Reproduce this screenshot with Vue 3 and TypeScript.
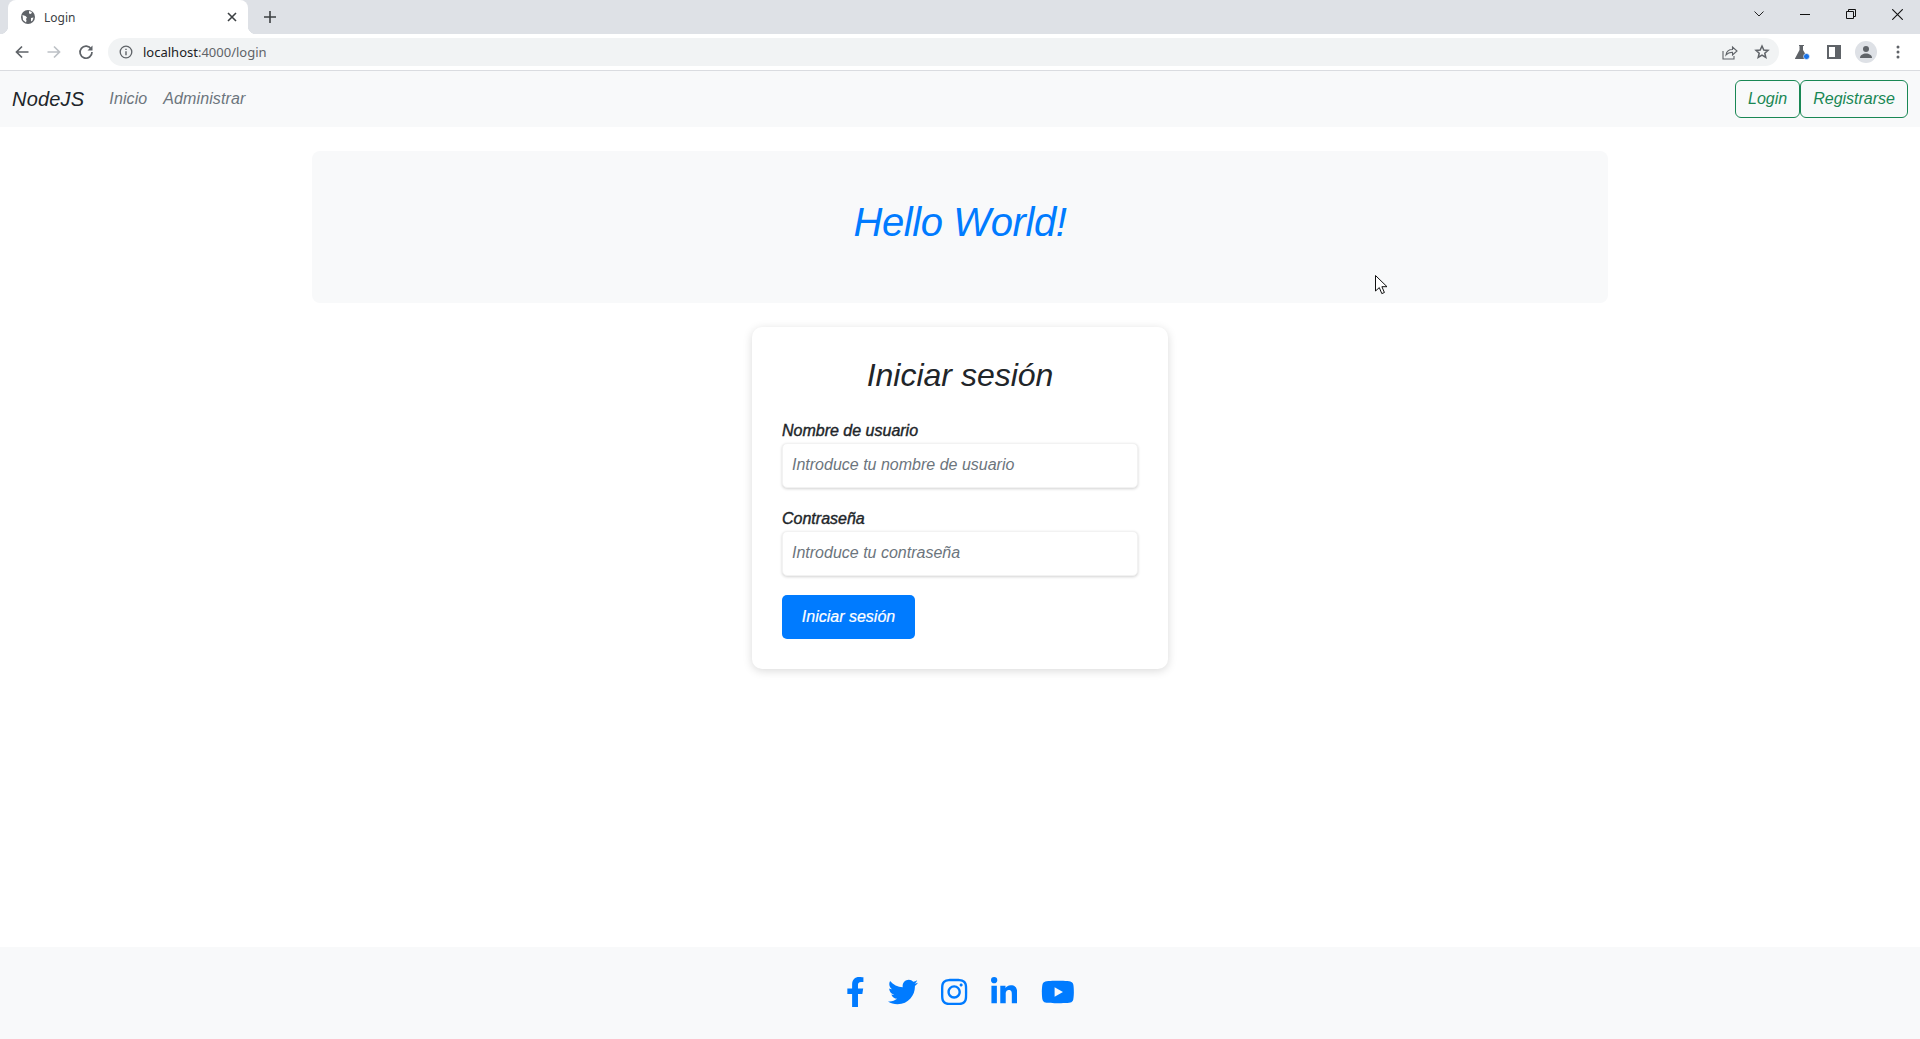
<script setup lang="ts">
const navLinks = ["Inicio", "Administrar"]

const socials = [
  { name: "facebook", w: 320, box: "0 0 320 512", d: "M279.14 288l14.22-92.66h-88.91v-60.13c0-25.35 12.42-50.06 52.24-50.06h40.42V6.26S260.43 0 225.36 0c-73.22 0-121.08 44.38-121.08 124.72v70.62H22.89V288h81.39v224h100.17V288z" },
  { name: "twitter", w: 512, box: "0 0 512 512", d: "M459.37 151.716c.325 4.548.325 9.097.325 13.645 0 138.72-105.583 298.558-298.558 298.558-59.452 0-114.68-17.219-161.137-47.106 8.447.974 16.568 1.299 25.34 1.299 49.055 0 94.213-16.568 130.274-44.832-46.132-.975-84.792-31.188-98.112-72.772 6.498.974 12.995 1.624 19.818 1.624 9.421 0 18.843-1.3 27.614-3.573-48.081-9.747-84.143-51.98-84.143-102.985v-1.299c13.969 7.797 30.214 12.67 47.431 13.319-28.264-18.843-46.781-51.005-46.781-87.391 0-19.492 5.197-37.36 14.294-52.954 51.655 63.675 129.3 105.258 216.365 109.807-1.624-7.797-2.599-15.918-2.599-24.04 0-57.828 46.782-104.934 104.934-104.934 30.213 0 57.502 12.67 76.67 33.137 23.715-4.548 46.456-13.32 66.599-25.34-7.798 24.366-24.366 44.833-46.132 57.827 21.117-2.273 41.584-8.122 60.426-16.243-14.292 20.791-32.161 39.308-52.628 54.253z" },
  { name: "instagram", w: 448, box: "0 0 448 512", d: "M224.1 141c-63.6 0-114.9 51.3-114.9 114.9s51.3 114.9 114.9 114.9S339 319.5 339 255.9 287.7 141 224.1 141zm0 189.6c-41.1 0-74.7-33.5-74.7-74.7s33.5-74.7 74.7-74.7 74.7 33.5 74.7 74.7-33.6 74.7-74.7 74.7zm146.4-194.3c0 14.9-12 26.8-26.8 26.8-14.9 0-26.8-12-26.8-26.8s12-26.8 26.8-26.8 26.8 12 26.8 26.8zm76.1 27.2c-1.7-35.9-9.9-67.7-36.2-93.9-26.2-26.2-58-34.4-93.9-36.2-37-2.1-147.9-2.1-184.9 0-35.8 1.7-67.6 9.9-93.9 36.1s-34.4 58-36.2 93.9c-2.1 37-2.1 147.9 0 184.9 1.7 35.9 9.9 67.7 36.2 93.9s58 34.4 93.9 36.2c37 2.1 147.9 2.1 184.9 0 35.9-1.7 67.7-9.9 93.9-36.2 26.2-26.2 34.4-58 36.2-93.9 2.1-37 2.1-147.8 0-184.8zM398.8 388c-7.8 19.6-22.9 34.7-42.6 42.6-29.5 11.7-99.5 9-132.1 9s-102.7 2.6-132.1-9c-19.6-7.8-34.7-22.9-42.6-42.6-11.7-29.5-9-99.5-9-132.1s-2.6-102.7 9-132.1c7.8-19.6 22.9-34.7 42.6-42.6 29.5-11.7 99.5-9 132.1-9s102.7-2.6 132.1 9c19.6 7.8 34.7 22.9 42.6 42.6 11.7 29.5 9 99.5 9 132.1s2.7 102.7-9 132.1z" },
  { name: "linkedin", w: 448, box: "0 0 448 512", d: "M100.28 448H7.4V148.9h92.88zM53.79 108.1C24.09 108.1 0 83.5 0 53.8a53.79 53.79 0 0 1 107.58 0c0 29.7-24.1 54.3-53.79 54.3zM447.9 448h-92.68V302.4c0-34.7-.7-79.2-48.29-79.2-48.29 0-55.69 37.7-55.69 76.7V448h-92.78V148.9h89.08v40.8h1.3c12.4-23.5 42.69-48.3 87.88-48.3 94 0 111.28 61.9 111.28 142.3V448z" },
  { name: "youtube", w: 576, box: "0 0 576 512", d: "M549.655 124.083c-6.281-23.65-24.787-42.276-48.284-48.597C458.781 64 288 64 288 64S117.22 64 74.629 75.486c-23.497 6.322-42.003 24.947-48.284 48.597-11.412 42.867-11.412 132.305-11.412 132.305s0 89.438 11.412 132.305c6.281 23.65 24.787 41.5 48.284 47.821C117.22 448 288 448 288 448s170.78 0 213.371-11.486c23.497-6.321 42.003-24.171 48.284-47.821 11.412-42.867 11.412-132.305 11.412-132.305s0-89.438-11.412-132.305zm-317.51 213.508V175.185l142.739 81.205-142.739 81.201z" },
]
</script>

<template>
  <div class="page">
    <div class="tabstrip">
      <div class="tab">
        <svg class="favicon" viewBox="0 0 16 16" width="16" height="16">
          <circle cx="8" cy="8" r="7" fill="#5f6368" />
          <path d="M2.5 6l3 1 1.5 1.5-1 1.5.5 1.5-.5 2L3 11zM9 2l3 1-1 2-2-.5zM11 9l2.5-.5-1 3-1.500 1z" fill="#fff" />
        </svg>
        <span class="tab-title">Login</span>
        <svg class="tab-close" viewBox="0 0 10 10" width="10" height="10">
          <path d="M1 1l8 8M9 1l-8 8" stroke="#3c4043" stroke-width="1.6" fill="none" />
        </svg>
      </div>
      <svg class="new-tab" viewBox="0 0 12 12" width="12" height="12">
        <path d="M6 0v12M0 6h12" stroke="#3c4043" stroke-width="1.6" fill="none" />
      </svg>
      <div class="win-controls">
        <svg class="win-chevron" viewBox="0 0 10 6" width="10" height="6">
          <path d="M.5.5L5 5 9.5.5" stroke="#222" fill="none" />
        </svg>
        <svg class="win-min" viewBox="0 0 10 1" width="10" height="1">
          <path d="M0 .5h10" stroke="#111" fill="none" />
        </svg>
        <svg class="win-restore" viewBox="0 0 10 10" width="10" height="10">
          <path d="M.5 2.5h7v7h-7zM2.5 2.5v-2h7v7h-2" stroke="#111" fill="none" />
        </svg>
        <svg class="win-close" viewBox="0 0 10 10" width="10" height="10">
          <path d="M.2.2l9.6 9.6M9.8.2L.2 9.8" stroke="#111" fill="none" />
        </svg>
      </div>
    </div>

    <div class="toolbar">
      <svg class="tool-icon first" viewBox="0 0 16 16" width="16" height="16">
        <path d="M14.5 8H2.5M8 2.5L2.5 8 8 13.5" stroke="#5f6368" stroke-width="1.7" fill="none" />
      </svg>
      <svg class="tool-icon" viewBox="0 0 16 16" width="16" height="16">
        <path d="M1.5 8h12M8 2.5L13.5 8 8 13.5" stroke="#bdc1c6" stroke-width="1.7" fill="none" />
      </svg>
      <svg class="tool-icon" viewBox="0 0 16 16" width="16" height="16">
        <path d="M13.2 5.2A6 6 0 1 0 14 8" stroke="#5f6368" stroke-width="1.7" fill="none" />
        <path d="M14.5 1.5v5h-5z" fill="#5f6368" />
      </svg>
      <div class="omnibox">
        <svg class="info" viewBox="0 0 14 14" width="14" height="14">
          <circle cx="7" cy="7" r="5.8" stroke="#5f6368" stroke-width="1.3" fill="none" />
          <path d="M7 6.2v4M7 3.8v1.3" stroke="#5f6368" stroke-width="1.4" fill="none" />
        </svg>
        <span class="url"><span class="url-host">localhost</span>:4000/login</span>
        <svg class="omni-share" viewBox="0 0 16 16" width="16" height="16">
          <path d="M1 7v8h11v-3" stroke="#5f6368" stroke-width="1.1" fill="none" />
          <path d="M4 11c.5-3.5 3-5.5 6.5-5.5V3L15 7l-4.5 4V8.3C8 8.3 5.5 9.2 4 11z" stroke="#5f6368" stroke-width="1.1" fill="none" />
        </svg>
        <svg class="omni-star" viewBox="0 0 16 16" width="16" height="16">
          <path d="M8 2l1.8 4 4.2.4-3.2 2.8 1 4.3L8 11.200 4.200 13.500l1-4.300L2 6.400 6.200 6z" stroke="#5f6368" stroke-width="1.5" fill="none" />
        </svg>
      </div>
      <svg class="ext-flask" viewBox="0 0 16 16" width="16" height="16">
        <path d="M5 1h5v1H9v4l5 8.5V15H1v-.5L5.500 6V2H5z" fill="#5f6368" />
        <circle cx="12.5" cy="12.5" r="3" fill="#1a73e8" stroke="#fff" stroke-width=".6" />
      </svg>
      <svg class="ext-panel" viewBox="0 0 14 14" width="14" height="14">
        <path d="M0 0h14v14H0z" fill="#5f6368" />
        <path d="M2 2h6v10H2z" fill="#fff" />
      </svg>
      <div class="avatar">
        <svg viewBox="0 0 14 14" width="14" height="14">
          <circle cx="7" cy="4" r="3" fill="#5f6368" />
          <path d="M1 13c0-3 3-4.5 6-4.5s6 1.5 6 4.5z" fill="#5f6368" />
        </svg>
      </div>
      <svg class="kebab" viewBox="0 0 4 14" width="4" height="14">
        <circle cx="2" cy="2" r="1.5" fill="#5f6368" />
        <circle cx="2" cy="7" r="1.5" fill="#5f6368" />
        <circle cx="2" cy="12" r="1.5" fill="#5f6368" />
      </svg>
    </div>

    <nav class="navbar">
      <a class="brand">NodeJS</a>
      <a v-for="link in navLinks" :key="link" class="nav-link">{{ link }}</a>
      <div class="nav-actions">
        <button class="btn-outline">Login</button>
        <button class="btn-outline">Registrarse</button>
      </div>
    </nav>

    <main class="content">
      <div class="jumbotron">
        <h1 class="hello">Hello World!</h1>
      </div>

      <form class="login-card" @submit.prevent>
        <h2 class="card-title">Iniciar sesión</h2>
        <div class="field">
          <label for="username">Nombre de usuario</label>
          <input id="username" type="text" placeholder="Introduce tu nombre de usuario" />
        </div>
        <div class="field">
          <label for="password">Contraseña</label>
          <input id="password" type="password" placeholder="Introduce tu contraseña" />
        </div>
        <button class="btn-primary" type="submit">Iniciar sesión</button>
      </form>
    </main>

    <footer class="footer">
      <svg
        v-for="s in socials"
        :key="s.name"
        :viewBox="s.box"
        :width="(s.w / 512) * 30"
        height="30"
      >
        <path :d="s.d" fill="#007bff" />
      </svg>
    </footer>

    <svg class="cursor" viewBox="0 0 13 20" width="13" height="20">
      <path d="M.5.5v15.5l3.8-3.4 2.5 6 2.6-1.100-2.5-5.800h5.100z" fill="#fff" stroke="#111" stroke-width="1" />
    </svg>
  </div>
</template>

<style scoped>
.page {
  position: relative;
  display: flex;
  flex-direction: column;
  height: 1039px;
  overflow: hidden;
  background: #fff;
  font-family: "Liberation Sans", Arial, sans-serif;
  font-style: italic;
  color: #212529;
}

.tabstrip {
  display: flex;
  align-items: center;
  height: 34px;
  background: #dee1e6;
  flex-shrink: 0;
}

.tab {
  position: relative;
  display: flex;
  align-items: center;
  align-self: stretch;
  width: 240px;
  margin-left: 8px;
  padding: 0 11px 0 12px;
  box-sizing: border-box;
  background: #fff;
  border-radius: 8px 8px 0 0;
}

.tab::before,
.tab::after {
  content: "";
  position: absolute;
  bottom: 0;
  width: 8px;
  height: 8px;
}

.tab::before {
  left: -8px;
  background: radial-gradient(circle at 0 0, transparent 8px, #fff 8.5px);
}

.tab::after {
  right: -8px;
  background: radial-gradient(circle at 100% 0, transparent 8px, #fff 8.5px);
}

.tab-title {
  margin-left: 8px;
  font-family: "Noto Sans", "Open Sans", sans-serif;
  font-style: normal;
  font-size: 12px;
  color: #3c4043;
  flex: 1;
}

.new-tab {
  margin-left: 16px;
}

.win-controls {
  display: flex;
  align-items: center;
  margin-left: auto;
  padding-bottom: 6px;
  padding-right: 17px;
}

.win-min {
  margin-left: 36px;
}

.win-restore {
  margin-left: 36px;
}

.win-close {
  margin-left: 36px;
  width: 11px;
  height: 11px;
}

.toolbar {
  display: flex;
  align-items: center;
  height: 37px;
  box-sizing: border-box;
  background: #fff;
  border-bottom: 1px solid #dadce0;
  flex-shrink: 0;
  padding-bottom: 1px;
}

.tool-icon {
  margin-left: 16px;
}

.tool-icon.first {
  margin-left: 14px;
}

.omnibox {
  display: flex;
  align-items: center;
  flex: 1;
  height: 28px;
  margin-left: 14px;
  padding: 0 9px 0 11px;
  background: #f1f3f4;
  border-radius: 14px;
}

.url {
  margin-left: 10px;
  flex: 1;
  font-family: "Noto Sans", "Open Sans", sans-serif;
  font-style: normal;
  font-size: 13px;
  color: #5f6368;
}

.url-host {
  color: #202124;
}

.omni-star {
  margin-left: 16px;
}

.ext-flask {
  margin-left: 15px;
}

.ext-panel {
  margin-left: 17px;
}

.avatar {
  display: flex;
  align-items: center;
  justify-content: center;
  width: 22px;
  height: 22px;
  margin-left: 14px;
  border-radius: 50%;
  background: #dee1e6;
}

.kebab {
  margin-left: 19px;
  margin-right: 20px;
}

.navbar {
  display: flex;
  align-items: center;
  height: 56px;
  padding: 0 12px;
  box-sizing: border-box;
  background: #f8f9fa;
  flex-shrink: 0;
}

.brand {
  font-size: 20px;
  letter-spacing: 0.2px;
  color: #212529;
  margin-right: 17px;
}

.nav-link {
  padding: 0 8px;
  font-size: 16px;
  letter-spacing: 0.1px;
  color: #6c757d;
}

.nav-actions {
  display: flex;
  margin-left: auto;
}

.btn-outline {
  height: 38px;
  padding: 0 12px;
  font: italic 16px "Liberation Sans", Arial, sans-serif;
  color: #198754;
  background: transparent;
  border: 1px solid #198754;
  border-radius: 6px;
}

.content {
  display: flex;
  flex-direction: column;
  align-items: center;
  flex: 1;
  padding-top: 24px;
}

.jumbotron {
  width: 1296px;
  height: 152px;
  box-sizing: border-box;
  padding-top: 47px;
  background: #f8f9fa;
  border-radius: 8px;
  text-align: center;
}

.hello {
  margin: 0;
  font-size: 40px;
  font-weight: 400;
  line-height: 48px;
  letter-spacing: -0.4px;
  color: #007bff;
}

.login-card {
  width: 416px;
  height: 342px;
  margin-top: 24px;
  padding: 29px 30px;
  box-sizing: border-box;
  background: #fff;
  border-radius: 10px;
  box-shadow: 0 2px 10px rgba(0, 0, 0, 0.15);
}

.card-title {
  margin: 0 0 25px;
  font-size: 32px;
  font-weight: 400;
  line-height: 38px;
  text-align: center;
  color: #212529;
}

.field {
  display: flex;
  flex-direction: column;
  margin-bottom: 20px;
}

.field label {
  font-size: 16px;
  font-weight: 400;
  line-height: 24px;
  -webkit-text-stroke: 0.4px #212529;
  color: #212529;
}

.field input {
  height: 45px;
  margin-bottom: -1px;
  padding: 0 9px 1px;
  box-sizing: border-box;
  font: italic 16px "Liberation Sans", Arial, sans-serif;
  background: #fff;
  border: 1px solid #f2f2f2;
  border-radius: 5px;
  box-shadow: 0 1px 3px rgba(0, 0, 0, 0.18);
  outline: none;
}

.field input::placeholder {
  color: #6c757d;
}

.btn-primary {
  display: block;
  width: 133px;
  height: 44px;
  font: italic 16px "Liberation Sans", Arial, sans-serif;
  -webkit-text-stroke: 0.2px #fff;
  color: #fff;
  background: #007bff;
  border: none;
  border-radius: 5px;
}

.footer {
  display: flex;
  align-items: center;
  justify-content: center;
  gap: 23.5px;
  height: 92px;
  padding-bottom: 2px;
  box-sizing: border-box;
  background: #f8f9fa;
  flex-shrink: 0;
}

.cursor {
  position: absolute;
  left: 1375px;
  top: 275px;
}
</style>

<style>
html,
body {
  margin: 0;
  background: #fff;
}
</style>
